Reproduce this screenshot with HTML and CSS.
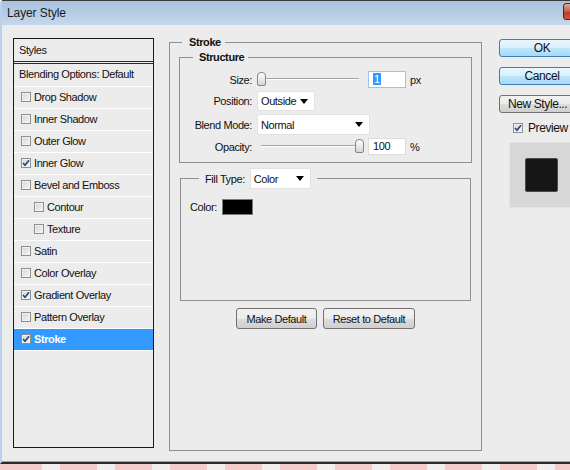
FILE: index.html
```html
<!DOCTYPE html>
<html lang="en">
<head>
    <meta charset="UTF-8">
    <title>Layer Style</title>
    <link rel="stylesheet" href="styles.css">
</head>
<body>
<div class="window">
    <div class="titlebar">
        <span class="title">Layer Style</span>
        <span class="close-btn"></span>
    </div>

    <div class="dlg-body">
        <!-- left: list of styles -->
        <div class="style-list">
            <div class="style-head">Styles</div>
            <div class="style-blend">Blending Options: Default</div>
            <div class="style-item"><span class="chk"></span>Drop Shadow</div>
            <div class="style-item"><span class="chk"></span>Inner Shadow</div>
            <div class="style-item"><span class="chk"></span>Outer Glow</div>
            <div class="style-item"><span class="chk on"><svg viewBox="0 0 8 8" width="8" height="8"><path d="M1 4 L3 6.3 L7 1.3" fill="none" stroke="#24408e" stroke-width="1.6"/></svg></span>Inner Glow</div>
            <div class="style-item"><span class="chk"></span>Bevel and Emboss</div>
            <div class="style-item sub"><span class="chk"></span>Contour</div>
            <div class="style-item sub"><span class="chk"></span>Texture</div>
            <div class="style-item"><span class="chk"></span>Satin</div>
            <div class="style-item"><span class="chk"></span>Color Overlay</div>
            <div class="style-item"><span class="chk on"><svg viewBox="0 0 8 8" width="8" height="8"><path d="M1 4 L3 6.3 L7 1.3" fill="none" stroke="#24408e" stroke-width="1.6"/></svg></span>Gradient Overlay</div>
            <div class="style-item"><span class="chk"></span>Pattern Overlay</div>
            <div class="style-item selected"><span class="chk on"><svg viewBox="0 0 8 8" width="8" height="8"><path d="M1 4 L3 6.3 L7 1.3" fill="none" stroke="#24408e" stroke-width="1.6"/></svg></span>Stroke</div>
        </div>

        <!-- middle: stroke settings -->
        <fieldset class="grp grp-stroke">
            <legend class="lg-stroke">Stroke</legend>

            <fieldset class="grp grp-structure">
                <legend class="lg-structure">Structure</legend>

                <div class="row row-17">
                    <span class="lbl">Size:</span>
                    <div class="slider">
                        <div class="track"></div>
                        <div class="thumb" style="left: 0px;"></div>
                    </div>
                    <div class="num focus"><span class="sel">1</span></div>
                    <span class="unit">px</span>
                </div>

                <div class="row row-20">
                    <span class="lbl">Position:</span>
                    <div class="dropdown dd-pos"><span>Outside</span><span class="arrow"></span></div>
                </div>

                <div class="row row-21">
                    <span class="lbl">Blend Mode:</span>
                    <div class="dropdown dd-blend"><span>Normal</span><span class="arrow"></span></div>
                </div>

                <div class="row row-17">
                    <span class="lbl">Opacity:</span>
                    <div class="slider">
                        <div class="track"></div>
                        <div class="thumb" style="left: 98px;"></div>
                    </div>
                    <div class="num">100</div>
                    <span class="unit">%</span>
                </div>
            </fieldset>

            <fieldset class="grp grp-fill">
                <legend class="lg-fill">
                    <span>Fill Type:</span>
                    <div class="dropdown dd-fill"><span>Color</span><span class="arrow"></span></div>
                </legend>
                <div class="color-row">
                    <span>Color:</span>
                    <span class="swatch"></span>
                </div>
            </fieldset>

            <div class="btn-row">
                <button class="btn btn-make">Make Default</button>
                <button class="btn btn-reset">Reset to Default</button>
            </div>
        </fieldset>

        <!-- right: dialog buttons + preview -->
        <div class="side">
            <button class="btn btn-main">OK</button>
            <button class="btn btn-main">Cancel</button>
            <button class="btn btn-side">New Style...</button>
            <div class="preview-row">
                <span class="chk on"><svg viewBox="0 0 8 8" width="8" height="8"><path d="M1 4 L3 6.3 L7 1.3" fill="none" stroke="#24408e" stroke-width="1.6"/></svg></span>
                <span>Preview</span>
            </div>
            <div class="preview-box">
                <div class="preview-square"></div>
            </div>
        </div>
    </div>
</div>
<div class="desk"></div>
</body>
</html>
```

FILE: styles.css
```css
/* --- Layer Style dialog --- */
:root {
    --dlg-bg: #ececec;
    --dlg-text: #111111;
    --grp-border: #8f8f8f;
    --sel-blue: #3399ff;
}

* {
    box-sizing: border-box;
}

html, body {
    margin: 0;
    height: 470px;
    overflow: hidden;
}

body {
    background: #f3eeee;
    font-family: "Liberation Sans", Arial, sans-serif;
    font-size: 11px;
    letter-spacing: -0.4px;
    color: var(--dlg-text);
}

.window {
    width: 612px;
    border-left: 2px solid #b9d1ea;
    border-bottom: 2px solid #2b2b2b;
    border-top-left-radius: 4px;
    background: var(--dlg-bg);
}

.titlebar {
    height: 25px;
    border-top: 1px solid #3c3c3c;
    background: linear-gradient(#a9c2df, #c5d7eb);
    display: flex;
    align-items: center;
}

.title {
    flex: 1;
    padding-left: 5px;
    font-size: 12px;
    letter-spacing: -0.1px;
    color: #1b1b1b;
}

.close-btn {
    width: 43px;
    height: 17px;
    margin-right: 6px;
    margin-top: -3px;
    border: 1px solid #5a211a;
    border-radius: 3px;
    background: linear-gradient(#e3a99f, #c65a48 50%, #b83a26 51%, #d2553e);
}

.dlg-body {
    height: 437px;
    border-bottom: 1px solid #47c6e6;
    display: flex;
    align-items: flex-start;
    padding-left: 11px;
}

/* --- style list --- */
.style-list {
    width: 141px;
    height: 410px;
    margin-top: 13px;
    border: 1px solid #1a1a1a;
    background: var(--dlg-bg);
}

.style-head {
    height: 25px;
    line-height: 22px;
    padding-left: 5px;
    border-bottom: 3px double #2a2a2a;
}

.style-blend {
    height: 23px;
    line-height: 21px;
    padding-left: 5px;
    border-bottom: 1px solid #ffffff;
}

.style-item {
    height: 22px;
    padding-bottom: 1px;
    border-bottom: 1px solid #ffffff;
    display: flex;
    align-items: center;
    padding-left: 7px;
}

.style-item.sub {
    padding-left: 20px;
}

.style-item.selected {
    background: var(--sel-blue);
    color: #ffffff;
    font-weight: bold;
}

.chk {
    width: 10px;
    height: 10px;
    margin-right: 3px;
    border: 1px solid #8e8f8f;
    background: linear-gradient(135deg, #d4d4d4, #f6f6f6);
    box-shadow: inset 0 0 0 1px #f2f2f2;
    display: flex;
    align-items: center;
    justify-content: center;
}

.chk svg {
    display: block;
}

/* --- groups --- */
fieldset.grp {
    margin: 0;
    min-width: 0;
    border: 1px solid var(--grp-border);
}

legend {
    line-height: 14px;
}

fieldset.grp-stroke {
    width: 313px;
    margin: 10px 0 0 15px;
    padding: 1px 9px 121px 9px;
}

.lg-stroke {
    font-weight: bold;
    margin-left: 3px;
    padding: 0 4px 0 7px;
}

fieldset.grp-structure {
    padding: 7px 0 7px 0;
}

.lg-structure {
    font-weight: bold;
    margin-left: 13px;
    padding: 0 4px 0 6px;
}

.row {
    display: flex;
    align-items: center;
}

.row + .row {
    margin-top: 3px;
}

.row-17 { height: 17px; }
.row-20 { height: 20px; }
.row-21 { height: 21px; }

.lbl {
    width: 72px;
    text-align: right;
    margin-right: 5px;
}

.slider {
    position: relative;
    width: 106px;
    height: 17px;
    margin-right: 5px;
}

.track {
    margin: 7px 0 0 4px;
    width: 98px;
    height: 2px;
    border-top: 1px solid #a4a4a4;
    border-bottom: 1px solid #ffffff;
}

.thumb {
    position: absolute;
    top: 1px;
    width: 9px;
    height: 14px;
    border: 1px solid #868686;
    border-radius: 4px 4px 2px 2px;
    background: linear-gradient(#ffffff, #d6d6d6);
}

.num {
    width: 38px;
    height: 17px;
    padding-left: 4px;
    line-height: 15px;
    background: #ffffff;
    border: 1px solid #dcdcdc;
}

.num.focus {
    border-color: #9ec3e8;
}

.sel {
    background: var(--sel-blue);
    color: #ffffff;
    padding: 0 1px;
}

.unit {
    margin-left: 4px;
}

.dropdown {
    height: 100%;
    background: #ffffff;
    border: 1px solid #e2e2e2;
    display: flex;
    align-items: center;
    justify-content: space-between;
    padding: 0 6px 0 3px;
}

.arrow {
    width: 0;
    height: 0;
    border-left: 4px solid transparent;
    border-right: 4px solid transparent;
    border-top: 5px solid #000000;
}

.dd-pos { width: 58px; }
.dd-blend { width: 113px; }

fieldset.grp-fill {
    margin: 5px 1px 0 1px;
    padding: 10px 9px 85px 9px;
}

.lg-fill {
    margin-left: 9px;
    padding: 0 6px;
    display: flex;
    align-items: center;
    gap: 5px;
}

.dd-fill {
    width: 61px;
    height: 21px;
}

.color-row {
    display: flex;
    align-items: center;
    height: 16px;
    gap: 5px;
}

.swatch {
    width: 31px;
    height: 16px;
    background: #000000;
    border: 1px solid #7a7a7a;
}

/* --- buttons --- */
.btn {
    font-family: inherit;
    font-size: 11px;
    letter-spacing: inherit;
    color: #111111;
    border: 1px solid #707070;
    border-radius: 3px;
    background: linear-gradient(#f2f2f2, #ebebeb 50%, #dddddd 51%, #cfcfcf);
    padding: 0;
}

.btn-row {
    margin-top: 7px;
    display: flex;
    justify-content: center;
    gap: 6px;
}

.btn-make { width: 81px; height: 21px; }
.btn-reset { width: 92px; height: 21px; }

.side {
    margin: 14px 0 0 17px;
    display: flex;
    flex-direction: column;
    align-items: flex-start;
}

.btn-main,
.btn-side {
    width: 86px;
    height: 18px;
    font-size: 12px;
}

.btn-side {
    text-align: left;
    padding-left: 8px;
}

.btn-main {
    border-color: #3c7fb1;
    background: linear-gradient(#eaf6fd, #d9f0fc 50%, #bee6fd 51%, #a7d9f5);
}

.btn-main + .btn {
    margin-top: 10px;
}

.preview-row {
    margin: 9px 0 0 14px;
    height: 12px;
    display: flex;
    align-items: center;
    gap: 2px;
    font-size: 12px;
}

.preview-box {
    margin: 8px 0 0 10px;
    width: 65px;
    height: 66px;
    background: #d7d7d7;
    border: 1px solid #e4e4e4;
    display: flex;
    align-items: center;
    justify-content: center;
}

.preview-square {
    width: 33px;
    height: 34px;
    background: #161616;
    border: 1px solid #4a4a4a;
    border-radius: 2px;
}

.desk {
    height: 8px;
    background: repeating-linear-gradient(90deg, #f4cccc 0 37px, #f3eeee 37px 55px);
    background-position: 5px 0;
}
```
